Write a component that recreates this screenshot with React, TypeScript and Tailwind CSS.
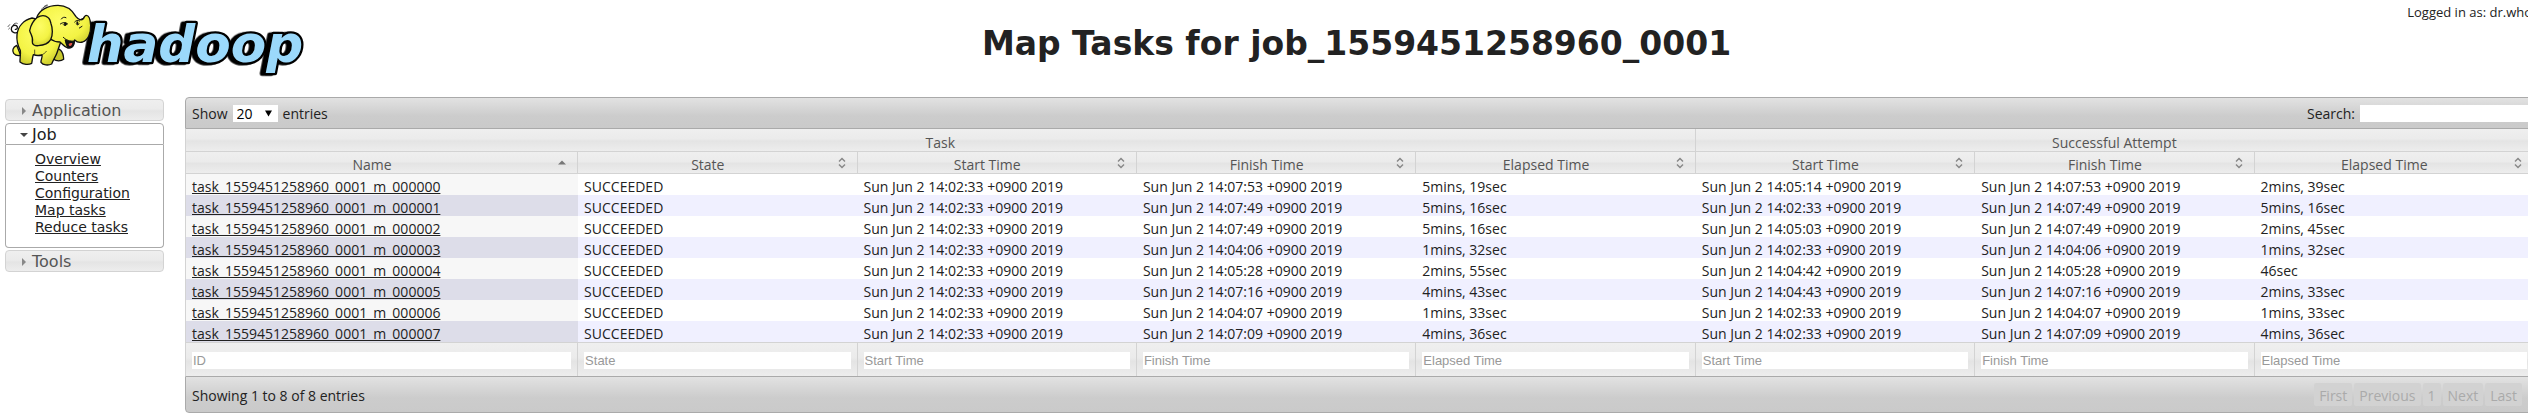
import { ReactNode } from "react";

const columns = [
  { label: "Name", placeholder: "ID", sorted: true },
  { label: "State", placeholder: "State" },
  { label: "Start Time", placeholder: "Start Time" },
  { label: "Finish Time", placeholder: "Finish Time" },
  { label: "Elapsed Time", placeholder: "Elapsed Time" },
  { label: "Start Time", placeholder: "Start Time" },
  { label: "Finish Time", placeholder: "Finish Time" },
  { label: "Elapsed Time", placeholder: "Elapsed Time" },
];

// start, finish, elapsed, attempt start, attempt finish, attempt elapsed
const tasks = [
  ["14:02:33", "14:07:53", "5mins, 19sec", "14:05:14", "14:07:53", "2mins, 39sec"],
  ["14:02:33", "14:07:49", "5mins, 16sec", "14:02:33", "14:07:49", "5mins, 16sec"],
  ["14:02:33", "14:07:49", "5mins, 16sec", "14:05:03", "14:07:49", "2mins, 45sec"],
  ["14:02:33", "14:04:06", "1mins, 32sec", "14:02:33", "14:04:06", "1mins, 32sec"],
  ["14:02:33", "14:05:28", "2mins, 55sec", "14:04:42", "14:05:28", "46sec"],
  ["14:02:33", "14:07:16", "4mins, 43sec", "14:04:43", "14:07:16", "2mins, 33sec"],
  ["14:02:33", "14:04:07", "1mins, 33sec", "14:02:33", "14:04:07", "1mins, 33sec"],
  ["14:02:33", "14:07:09", "4mins, 36sec", "14:02:33", "14:07:09", "4mins, 36sec"],
];

const glass = "bg-[linear-gradient(to_bottom,#efefef_0%,#ebebeb_45%,#e4e4e4_55%,#ededed_100%)]";
const bar = "bg-[linear-gradient(to_bottom,#e2e2e2_0%,#cccccc_60%,#cacaca_100%)]";

function stamp(value: string) {
  return value.includes(":") ? `Sun Jun 2 ${value} +0900 2019` : value;
}

function Logo() {
  return (
    <svg viewBox="0 0 960 270" className="h-[90px] w-[320px]" role="img" aria-label="hadoop">
      <defs>
        <radialGradient id="skin" cx="45%" cy="35%" r="70%">
          <stop offset="0%" stopColor="#fdfd66" />
          <stop offset="65%" stopColor="#f3f344" />
          <stop offset="100%" stopColor="#c9c92c" />
        </radialGradient>
      </defs>
      <text
        x="260"
        y="185"
        fontFamily="'DejaVu Sans', sans-serif"
        fontWeight="700"
        fontStyle="oblique"
        fontSize="155"
        fill="#9bd9fb"
        stroke="#000"
        strokeWidth="14"
        strokeLinejoin="round"
        className="[paint-order:stroke] drop-shadow-[-11px_2px_0_#000]"
      >
        hadoop
      </text>
      <g stroke="#111" strokeWidth="4" strokeLinecap="round" strokeLinejoin="round" fill="url(#skin)">
        <path d="M55 96c-8 5-20 2-21-7-1-9 7-16 15-12 6 4 3 12-3 11" fill="none" />
        <path d="M40 74c2-4 8-6 12-4M24 80l5-6M26 87l3-3" fill="none" strokeWidth="2" />
        <path d="M50 136c-12 6-14 16-9 24 5 6 13 8 21 6z" />
        <path d="M160 146c18-4 30 6 31 32-8 6-22 6-30 0z" fill="#c9c92c" />
        <path d="M96 54C72 60 54 78 51 104c-2 18 3 34 10 48 2 12-2 24-1 34 10 8 26 9 35 4 2-8 2-18 5-26 8 3 18 3 26 1 2 8-4 14-3 22 6 9 22 10 32 5 4-12 12-22 16-34l12-34-24-54z" />
        <path d="M110 54c6-22 32-38 64-38 26 0 44 16 54 34 8 10 16 12 22 6 3-7 5-10 9-10 8 0 12 12 13 30 1 24-8 44-24 50-10 3-18 0-24-6-2 14-8 26-20 24-12-3-16-12-24-18-12 0-22-4-30-10l-40-20z" />
        <path d="M112 52c-12 10-20 24-23 40 3 12 12 20 8 34-1 8 8 12 18 11 14-1 30-6 37-18 7-14 6-36 1-48-2-10-4-15-8-18-10-8-24-6-33-1z" />
        <path d="M196 120c2 12 4 22 12 23 9 0 14-8 15-18-8 1-18 0-27-5z" fill="#111" />
        <path d="M206 132c4-3 8-4 11-2-1 5-4 9-8 8-2-1-3-4-3-6z" fill="#e9564b" stroke="none" />
        <path d="M181 72c6-5 16-6 22 0M184 57c3-5 9-7 14-4M224 66c4-5 10-6 15-3M190 74c3 4 8 4 10-2M229 72c2 4 7 4 8-1M242 58l10-4M238 84l8-5M190 112c8 8 20 13 32 11" fill="none" strokeWidth="3" />
        <ellipse cx="196" cy="72" rx="4" ry="5" fill="#111" stroke="none" />
        <ellipse cx="232" cy="69" rx="3" ry="5" fill="#111" stroke="none" />
        <path d="M124 28c5-5 11-9 17-11M132 20c3-3 7-5 10-5M104 150v14M124 165c6-2 12-6 15-11" fill="none" strokeWidth="2" />
      </g>
    </svg>
  );
}

function SortIcon({ ascending }: { ascending?: boolean }) {
  return (
    <svg viewBox="0 0 8 12" className="mt-[5px] mr-[11px] h-3 w-2 shrink-0" aria-hidden="true">
      {ascending ? (
        <path d="M0 7.500L4 3.500L8 7.500Z" fill="#777" />
      ) : (
        <path d="M1 4.500L4 1.500L7 4.500M1 7.500L4 10.500L7 7.500" fill="none" stroke="#888" strokeWidth="1.500" />
      )}
    </svg>
  );
}

function NavHeading({ open, children }: { open?: boolean; children: ReactNode }) {
  return (
    <button
      type="button"
      aria-expanded={!!open}
      className={`flex h-[22px] w-full items-center border pt-[2px] pl-[14px] text-left text-base leading-[18px] ${
        open ? "rounded-t border-[#aaa] bg-white text-[#212121]" : `rounded border-[#d3d3d3] text-[#555] ${glass}`
      }`}
    >
      <svg viewBox="0 0 8 8" className="mr-1 h-2 w-2 shrink-0" aria-hidden="true">
        {open ? <path d="M0 2H8L4 6Z" fill="#454545" /> : <path d="M2 0L6 4L2 8Z" fill="#888" />}
      </svg>
      {children}
    </button>
  );
}

function Sidebar() {
  return (
    <nav className="flex w-[159px] flex-col gap-[2px] pt-[2px] font-['DejaVu_Sans',sans-serif]">
      <NavHeading>Application</NavHeading>
      <div>
        <NavHeading open>Job</NavHeading>
        <ul className="rounded-b border border-t-0 border-[#aaa] pt-[6px] pb-[11px] pl-[29px] text-sm leading-[17px] text-[#212121]">
          {["Overview", "Counters", "Configuration", "Map tasks", "Reduce tasks"].map((item) => (
            <li key={item}>
              <a href="#" className="underline">{item}</a>
            </li>
          ))}
        </ul>
      </div>
      <NavHeading>Tools</NavHeading>
    </nav>
  );
}

function TaskTable() {
  return (
    <table className="w-full table-fixed border-separate border-spacing-0 border-l border-[#d3d3d3] leading-4">
      <colgroup>
        <col className="w-[16.7%]" />
        <col span={7} />
      </colgroup>
      <thead className="text-[#555]">
        <tr>
          <th colSpan={5} className={`h-[23px] border-r border-b border-[#d3d3d3] p-0 pt-[5px] font-normal ${glass}`}>Task</th>
          <th colSpan={3} className={`h-[23px] border-r border-b border-[#d3d3d3] p-0 pt-[5px] font-normal ${glass}`}>Successful Attempt</th>
        </tr>
        <tr>
          {columns.map((column, i) => (
            <th key={i} className={`h-[22px] border-r border-b border-[#d3d3d3] p-0 font-normal ${glass}`}>
              <div className="flex h-[21px]">
                <span className="grow pt-[5px]">{column.label}</span>
                <SortIcon ascending={column.sorted} />
              </div>
            </th>
          ))}
        </tr>
      </thead>
      <tbody className="text-[#222]">
        {tasks.map((task, i) => (
          <tr key={i} className={i % 2 ? "bg-[#f0f0ff]" : "bg-white"}>
            <td className={`h-[21px] p-0 pt-[5px] pl-[6px] ${i % 2 ? "bg-[#dddde9]" : "bg-[#f7f7f7]"}`}>
              <a href="#" className="underline">{`task_1559451258960_0001_m_00000${i}`}</a>
            </td>
            <td className="p-0 pt-[5px] pl-[6px]">SUCCEEDED</td>
            {task.map((value, j) => (
              <td key={j} className="p-0 pt-[5px] pl-[6px]">{stamp(value)}</td>
            ))}
          </tr>
        ))}
      </tbody>
      <tfoot>
        <tr>
          {columns.map((column, i) => (
            <th key={i} className={`h-[34px] border-t border-r border-[#d3d3d3] px-[6px] pt-px pb-0 ${glass}`}>
              <input
                type="text"
                aria-label={`Filter by ${column.placeholder}`}
                placeholder={column.placeholder}
                className="block h-[17px] w-full bg-white px-px font-['Liberation_Sans',sans-serif] text-[13px] font-normal placeholder:text-[#999]"
              />
            </th>
          ))}
        </tr>
      </tfoot>
    </table>
  );
}

export default function App() {
  return (
    <div className="overflow-hidden bg-white font-['Open_Sans','Noto_Sans',sans-serif] text-sm text-[#222]">
      <header className="grid h-[97px] grid-cols-[185px_1fr]">
        <Logo />
        <div className="grid">
          <h1 className="col-start-1 row-start-1 pt-[21px] text-center font-['DejaVu_Sans',sans-serif] text-[33px] leading-[46px] font-bold">
            Map Tasks for job_1559451258960_0001
          </h1>
          <p className="col-start-1 row-start-1 -mr-1 self-start justify-self-end pt-[2px] text-[13px] leading-5">
            Logged in as: dr.who
          </p>
        </div>
      </header>
      <div className="grid grid-cols-[180px_1fr] pl-[5px]">
        <Sidebar />
        <main className="-mr-[6px]">
          <div className={`flex h-8 items-center rounded-t border border-[#aaa] pr-1 pl-[6px] leading-4 ${bar}`}>
            <label className="flex items-center gap-[5px]">
              <span className="pt-[2px]">Show</span>
              <span className="relative flex">
                <select className="h-[17px] w-[45px] appearance-none bg-white pl-1 text-sm leading-[17px] text-black" defaultValue="20">
                  <option>20</option>
                  <option>40</option>
                  <option>60</option>
                </select>
                <svg viewBox="0 0 7 7" className="pointer-events-none absolute top-[5px] right-[6px] h-[7px] w-[7px]" aria-hidden="true">
                  <path d="M0 0.500H7L3.500 6.500Z" fill="#000" />
                </svg>
              </span>
              <span className="pt-[2px]">entries</span>
            </label>
            <label className="ml-auto flex items-center gap-[5px]">
              <span className="pt-[2px]">Search:</span>
              <input type="text" className="h-[17px] w-[169px] bg-white px-1" />
            </label>
          </div>
          <TaskTable />
          <div className={`flex h-[37px] items-center justify-between rounded-b border border-[#aaa] pr-[11px] pl-[6px] leading-4 ${bar}`}>
            <p className="pt-[3px]">Showing 1 to 8 of 8 entries</p>
            <div className="flex gap-[2px]">
              {["First", "Previous", "1", "Next", "Last"].map((label) => (
                <button key={label} type="button" disabled className="h-[23px] rounded-xs bg-[#d2d2d2] px-[5px] pt-[2px] text-[#aaa]">
                  {label}
                </button>
              ))}
            </div>
          </div>
        </main>
      </div>
    </div>
  );
}
